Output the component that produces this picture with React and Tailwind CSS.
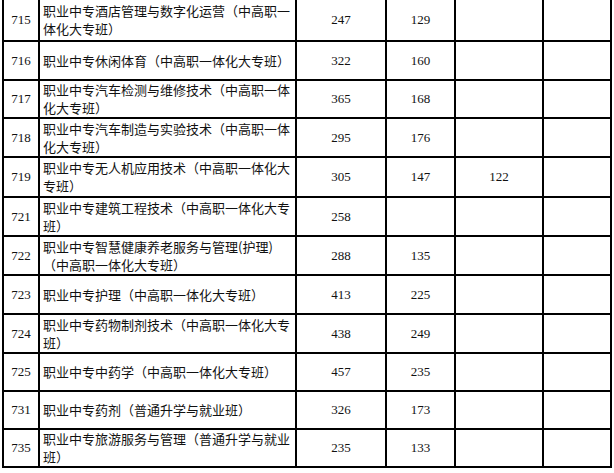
import React from 'react';

const ROWS = [
  { code: '715', name: ['职业中专酒店管理与数字化运营（中高职一', '体化大专班）'], a: '247', b: '129', c: '', h: 'h-[41px]', top: true },
  { code: '716', name: ['职业中专休闲体育（中高职一体化大专班）'], a: '322', b: '160', c: '', h: 'h-[39px]' },
  { code: '717', name: ['职业中专汽车检测与维修技术（中高职一体', '化大专班）'], a: '365', b: '168', c: '', h: 'h-[38px]' },
  { code: '718', name: ['职业中专汽车制造与实验技术（中高职一体', '化大专班）'], a: '295', b: '176', c: '', h: 'h-[39px]' },
  { code: '719', name: ['职业中专无人机应用技术（中高职一体化大', '专班）'], a: '305', b: '147', c: '122', h: 'h-[40px]' },
  { code: '721', name: ['职业中专建筑工程技术（中高职一体化大专', '班）'], a: '258', b: '', c: '', h: 'h-[39px]' },
  { code: '722', name: ['职业中专智慧健康养老服务与管理(护理)', '（中高职一体化大专班）'], a: '288', b: '135', c: '', h: 'h-[39px]' },
  { code: '723', name: ['职业中专护理（中高职一体化大专班）'], a: '413', b: '225', c: '', h: 'h-[39px]' },
  { code: '724', name: ['职业中专药物制剂技术（中高职一体化大专', '班）'], a: '438', b: '249', c: '', h: 'h-[39px]' },
  { code: '725', name: ['职业中专中药学（中高职一体化大专班）'], a: '457', b: '235', c: '', h: 'h-[38px]' },
  { code: '731', name: ['职业中专药剂（普通升学与就业班）'], a: '326', b: '173', c: '', h: 'h-[38px]' },
  { code: '735', name: ['职业中专旅游服务与管理（普通升学与就业', '班）'], a: '235', b: '133', c: '', h: 'h-[38px]' },
];

const cell = 'border-2 border-black p-0';

export default function App() {
  return (
    <div className="w-[614px] h-[473px] overflow-hidden bg-white pl-[2px]">
      <table className="table-fixed border-collapse w-[610px] text-[#111]">
        <colgroup>
          <col className="w-[36px]" />
          <col className="w-[257px]" />
          <col className="w-[90px]" />
          <col className="w-[69px]" />
          <col className="w-[88px]" />
          <col className="w-[68px]" />
        </colgroup>
        <tbody>
          {ROWS.map(r => (
            <tr key={r.code} className={r.h}>
              <td className={`${cell} ${r.top ? 'border-t-0' : ''} text-center text-[13px] font-['Liberation_Serif',serif]`}>
                {r.code}
              </td>
              <td className={`${cell} ${r.top ? 'border-t-0' : ''} pl-[3px] text-[13px] leading-[18px] font-['Noto_Sans_CJK_SC',sans-serif] whitespace-nowrap overflow-hidden`}>
                {r.name.map((line, i) => (
                  <div key={i}>{line}</div>
                ))}
              </td>
              <td className={`${cell} ${r.top ? 'border-t-0' : ''} text-center text-[13px] font-['Liberation_Serif',serif]`}>{r.a}</td>
              <td className={`${cell} ${r.top ? 'border-t-0' : ''} text-center text-[13px] font-['Liberation_Serif',serif]`}>{r.b}</td>
              <td className={`${cell} ${r.top ? 'border-t-0' : ''} text-center text-[13px] font-['Liberation_Serif',serif]`}>{r.c}</td>
              <td className={`${cell} ${r.top ? 'border-t-0' : ''}`}></td>
            </tr>
          ))}
        </tbody>
      </table>
    </div>
  );
}
